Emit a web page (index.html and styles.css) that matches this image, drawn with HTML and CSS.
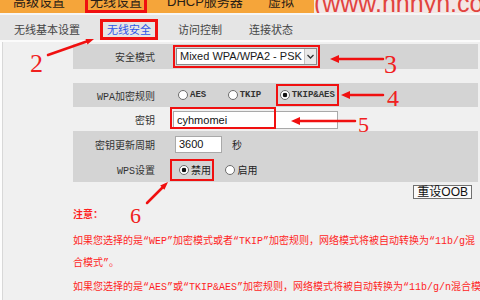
FILE: index.html
```html
<!DOCTYPE html>
<html lang="zh-CN">
<head>
    <meta charset="utf-8">
    <title>无线安全设置</title>
    <link rel="stylesheet" href="styles.css">
</head>
<body>
    <div class="page">
        <div class="topbar">
            <span class="menu">高级设置</span>
            <span class="menu menu-on">无线设置</span>
            <span class="menu">DHCP服务器</span>
            <span class="menu">虚拟</span>
            <span class="site">(www.hnhyn.com)</span>
        </div>
        <div class="tabs">
            <span class="tab">无线基本设置</span>
            <span class="tab tab-on">无线安全</span>
            <span class="tab">访问控制</span>
            <span class="tab">连接状态</span>
        </div>

        <div class="content">
            <table class="form">
                <tr class="shade r1">
                    <td class="label">安全模式</td>
                    <td class="value">
                        <span class="mark sel-mark">
                            <span class="select">
                                <span class="select-text">Mixed WPA/WPA2 - PSK</span>
                                <span class="select-btn">
                                    <svg width="9" height="9" viewBox="0 0 9 9"><path d="M1.5 3 L4.5 6 L7.5 3" fill="none" stroke="#333" stroke-width="1.3"/></svg>
                                </span>
                            </span>
                        </span>
                    </td>
                </tr>
                <tr class="gap"><td colspan="2"></td></tr>
                <tr class="shade r2">
                    <td class="label">WPA加密规则</td>
                    <td class="value">
                        <label class="opt opt-en first"><span class="radio"></span>AES</label>
                        <label class="opt opt-en second"><span class="radio"></span>TKIP</label>
                        <label class="opt opt-en mark both"><span class="radio on"></span>TKIP&amp;AES</label>
                    </td>
                </tr>
                <tr class="r3">
                    <td class="label">密钥</td>
                    <td class="value">
                        <span class="keybox"><span class="input key">cyhmomei</span></span>
                    </td>
                </tr>
                <tr class="shade r4">
                    <td class="label">密钥更新周期</td>
                    <td class="value">
                        <span class="input period">3600</span><span class="unit">秒</span>
                    </td>
                </tr>
                <tr class="shade r5">
                    <td class="label">WPS设置</td>
                    <td class="value">
                        <label class="opt mark wps-off"><span class="radio on"></span>禁用</label>
                        <label class="opt wps-on"><span class="radio"></span>启用</label>
                    </td>
                </tr>
            </table>

            <div class="actions">
                <button class="btn">重设OOB</button>
            </div>

            <div class="notes">
                <div class="notes-title">注意：</div>
                <p>如果您选择的是“WEP”加密模式或者“TKIP”加密规则，网络模式将被自动转换为“11b/g混<br>合模式”。</p>
                <p>如果您选择的是“AES”或“TKIP&amp;AES”加密规则，网络模式将被自动转换为“11b/g/n混合模式”。</p>
            </div>
        </div>

        <!-- 标注箭头和编号 -->
        <svg class="marks" width="480" height="300" viewBox="0 0 480 300">
            <g stroke="#f01010" stroke-width="2.5" stroke-linecap="round">
                <line x1="48" y1="55" x2="88" y2="41"/>
                <line x1="337" y1="59" x2="383" y2="59"/>
                <line x1="348" y1="95" x2="383" y2="95"/>
                <line x1="298" y1="121" x2="355" y2="121"/>
                <line x1="147" y1="203" x2="163" y2="187"/>
            </g>
            <g fill="#f01010">
                <polygon points="94,39 87.5,44.5 85.5,38.9"/>
                <polygon points="330,59 339,55 339,63"/>
                <polygon points="341,95 350,91 350,99"/>
                <polygon points="291,121 300,117 300,125"/>
                <polygon points="168,182 164.4,189.8 160.2,185.6"/>
            </g>
            <g class="num">
                <text x="30" y="72" font-size="26">2</text>
                <text x="384" y="73" font-size="26">3</text>
                <text x="387" y="106" font-size="24">4</text>
                <text x="358" y="132" font-size="22">5</text>
                <text x="130" y="223" font-size="22">6</text>
            </g>
        </svg>
    </div>
</body>
</html>
```

FILE: styles.css
```css
body {
    margin: 0;
    background-color: #f0f0f0;
}
.page {
    position: relative;
    width: 480px;
    height: 300px;
    overflow: hidden;
    font-family: "Liberation Sans", "Noto Sans CJK SC", sans-serif;
}

/* 顶部橙色菜单 */
.topbar {
    display: flex;
    align-items: flex-start;
    gap: 15px;
    height: 13px;
    padding-left: 8px;
    background-color: #f5a53a;
    overflow: hidden;
}
.menu {
    height: 16px;
    margin-top: -3px;
    padding: 0 2px;
    border: 3px solid transparent;
    box-sizing: border-box;
    font-size: 13px;
    line-height: 4px;
    color: #2a2016;
    white-space: nowrap;
}
.menu-on {
    border-color: #f01010;
}
.site {
    margin-left: auto;
    width: 203px;
    height: 13px;
    background-color: #f3e6e4;
    font-size: 25px;
    line-height: 6px;
    color: #e2433e;
    white-space: nowrap;
}

/* 二级标签 */
.tabs {
    display: flex;
    gap: 13px;
    height: 25px;
    padding: 4px 0 0 7px;
    box-sizing: border-box;
    border-top: 2px solid #f6f6f6;
    border-bottom: 2px solid #fbfbfb;
    background-color: #e5e5e5;
    height: 29px;
}
.tab {
    padding: 3px 4px 1px;
    border: 3px solid transparent;
    font-size: 11px;
    line-height: 11px;
    color: #444;
    white-space: nowrap;
}
.tab-on {
    border-color: #f01010;
    color: #2f55e8;
}

/* 内容区 */
.content {
    padding: 2px 0 0 71px;
    border-left: 2px solid #fdfdfd;
    box-shadow: inset 1px 0 0 #d8d8d8;
    height: 260px;
}
.form {
    width: 405px;
    border-collapse: collapse;
}
.form td {
    padding: 0;
}
.shade {
    background-color: #d4d4d4;
}
.r1 { height: 25px; }
.gap { height: 14px; }
.r2 { height: 24px; }
.r3 { height: 24px; }
.r4 { height: 26px; }
.r5 { height: 25px; }
.label {
    width: 82px;
    padding-right: 8px !important;
    text-align: right;
    font-family: "Liberation Mono", "Noto Sans CJK SC", monospace;
    font-size: 10px;
    color: #333;
    white-space: nowrap;
}
.value {
    padding-left: 7px !important;
    white-space: nowrap;
}

.mark {
    border: 2px solid #f01010;
}
.sel-mark {
    display: inline-block;
    margin-left: 3px;
    padding: 1px;
    vertical-align: middle;
}
.select {
    display: flex;
    width: 141px;
    height: 17px;
    box-sizing: border-box;
    border: 1px solid #8a8a8a;
    background-color: #fff;
}
.select-text {
    flex: 1;
    padding-left: 3px;
    font-size: 11px;
    line-height: 15px;
    color: #1a1a1a;
}
.select-btn {
    display: flex;
    align-items: center;
    justify-content: center;
    width: 11px;
    border-left: 1px solid #c4c4c4;
    background-color: #e9e9e9;
}

/* 单选 */
.opt {
    display: inline-flex;
    align-items: center;
    gap: 2px;
    vertical-align: middle;
    font-family: "Noto Sans CJK SC", sans-serif;
    font-size: 10px;
    line-height: 12px;
    color: #222;
}
.opt-en {
    font-family: "Liberation Mono", monospace;
    font-size: 9px;
    font-weight: bold;
    color: #333;
}
.first { margin-left: 8px; }
.second { margin-left: 17px; }
.both {
    margin-left: 10px;
    padding: 3px 2px;
}
.radio {
    width: 10px;
    height: 10px;
    box-sizing: border-box;
    border: 1px solid #6c6c6c;
    border-radius: 50%;
    background-color: #fff;
}
.radio.on {
    background: radial-gradient(circle, #111 0 2px, #fff 2.6px);
}
.wps-off {
    padding: 3px 1px 3px 7px;
}
.wps-on {
    margin-left: 7px;
}

/* 输入框 */
.input {
    display: inline-block;
    box-sizing: border-box;
    border: 1px solid #a9a9a9;
    background-color: #fff;
    padding-left: 3px;
    font-size: 11px;
    color: #111;
    vertical-align: middle;
}
.keybox {
    position: relative;
    display: inline-block;
    margin-left: 3px;
    vertical-align: middle;
}
.keybox::after {
    content: "";
    position: absolute;
    left: -3px;
    top: -3px;
    width: 106px;
    height: 22px;
    box-sizing: border-box;
    border: 2px solid #f01010;
}
.key {
    width: 165px;
    height: 18px;
    line-height: 16px;
}
.period {
    width: 47px;
    height: 17px;
    margin-left: 5px;
    line-height: 15px;
}
.unit {
    margin-left: 10px;
    font-family: "Noto Sans CJK SC", sans-serif;
    font-size: 10px;
    color: #222;
    vertical-align: middle;
}

.actions {
    display: flex;
    justify-content: flex-end;
    width: 405px;
    padding-top: 3px;
}
.btn {
    height: 14px;
    margin-right: 6px;
    padding: 0 3px;
    border: 1px solid #707070;
    background-color: #fbfbfb;
    font-family: "Liberation Sans", "Noto Sans CJK SC", sans-serif;
    font-size: 12px;
    line-height: 12px;
    color: #111;
}

/* 注意说明 */
.notes {
    margin-top: 4px;
    font-family: "Liberation Mono", "Noto Sans CJK SC", monospace;
    font-size: 10px;
    color: #ff1f1f;
    white-space: nowrap;
}
.notes-title {
    font-family: "Noto Sans CJK SC", sans-serif;
    font-weight: bold;
    line-height: 22px;
    margin-bottom: 6px;
}
.notes p {
    margin: 0 0 2px;
    line-height: 22px;
}

.marks {
    position: absolute;
    left: 0;
    top: 0;
    pointer-events: none;
}
.num text {
    font-family: "Liberation Serif", serif;
    fill: #f02020;
}
```
